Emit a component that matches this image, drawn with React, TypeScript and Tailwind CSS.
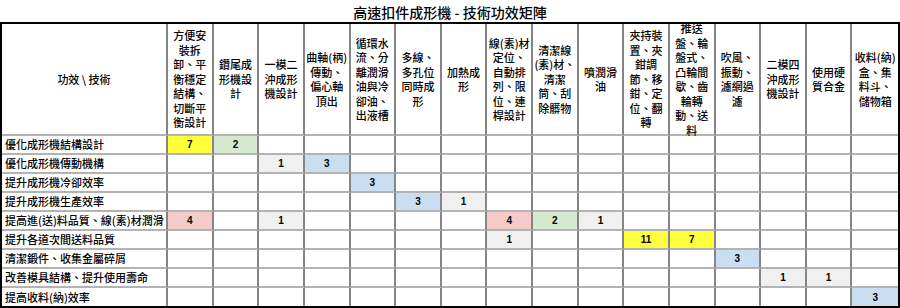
import React from "react";

const cols: string[][] = [
  ["方便安", "裝拆", "卸、平", "衡穩定", "結構、", "切斷平", "衡設計"],
  ["鑽尾成", "形機設", "計"],
  ["一模二", "沖成形", "機設計"],
  ["曲軸(柄)", "傳動、", "偏心軸", "頂出"],
  ["循環水", "流、分", "離潤滑", "油與冷", "卻油、", "出液槽"],
  ["多線、", "多孔位", "同時成", "形"],
  ["加熱成", "形"],
  ["線(素)材", "定位、", "自動排", "列、限", "位、連", "桿設計"],
  ["清潔線", "(素)材、", "清潔", "筒、刮", "除髒物"],
  ["噴潤滑", "油"],
  ["夾持裝", "置、夾", "鉗調", "節、移", "鉗、定", "位、翻", "轉"],
  ["推送", "盤、輪", "盤式、", "凸輪間", "歇、齒", "輪轉", "動、送", "料"],
  ["吹風、", "振動、", "濾網過", "濾"],
  ["二模四", "沖成形", "機設計"],
  ["使用硬", "質合金"],
  ["收料(納)", "盒、集", "料斗、", "儲物箱"],
];

type Cell = { v: string; c: string };
const Y = "bg-[#ffff3c]";
const G = "bg-[#d7e8d0]";
const Gr = "bg-[#f0f0f0]";
const B = "bg-[#cadef1]";
const P = "bg-[#f5caca]";

const rows: { label: string; cells: Record<number, Cell> }[] = [
  { label: "優化成形機結構設計", cells: { 0: { v: "7", c: Y }, 1: { v: "2", c: G } } },
  { label: "優化成形機傳動機構", cells: { 2: { v: "1", c: Gr }, 3: { v: "3", c: B } } },
  { label: "提升成形機冷卻效率", cells: { 4: { v: "3", c: B } } },
  { label: "提升成形機生產效率", cells: { 5: { v: "3", c: B }, 6: { v: "1", c: Gr } } },
  {
    label: "提高進(送)料品質、線(素)材潤滑",
    cells: {
      0: { v: "4", c: P },
      2: { v: "1", c: Gr },
      7: { v: "4", c: P },
      8: { v: "2", c: G },
      9: { v: "1", c: Gr },
    },
  },
  {
    label: "提升各道次間送料品質",
    cells: { 7: { v: "1", c: Gr }, 10: { v: "11", c: Y }, 11: { v: "7", c: Y } },
  },
  { label: "清潔鍛件、收集金屬碎屑", cells: { 12: { v: "3", c: B } } },
  { label: "改善模具結構、提升使用壽命", cells: { 13: { v: "1", c: Gr }, 14: { v: "1", c: Gr } } },
  { label: "提高收料(納)效率", cells: { 15: { v: "3", c: B } } },
];

const font = { fontFamily: '"Noto Sans CJK TC", "Noto Sans", sans-serif' };

export default function App() {
  return (
    <div className="w-[900px] h-[308px] bg-white text-black overflow-hidden" style={font}>
      <div className="h-[22px] flex items-center justify-center text-[14px] leading-none pt-[1px] font-medium">
        高速扣件成形機 - 技術功效矩陣
      </div>
      <div className="w-[900px] border-2 border-black grid grid-cols-[166px_repeat(16,minmax(0,1fr))] grid-rows-[112px_repeat(8,19px)_18px]">
        <div className="border-r-2 border-r-[#858585] border-b-2 border-b-[#b3b3b3] flex items-center justify-center text-[11px] font-medium whitespace-pre">
          功效 \ 技術
        </div>
        {cols.map((lines, i) => (
          <div
            key={i}
            className={`border-b-2 border-b-[#b3b3b3] flex flex-col items-center justify-center text-[11px] leading-[14.5px] whitespace-nowrap font-medium ${
              i < 15 ? "border-r-2 border-r-[#858585]" : ""
            }`}
          >
            {lines.map((l, j) => (
              <span key={j}>{l}</span>
            ))}
          </div>
        ))}
        {rows.map((r, ri) => {
          const last = ri === rows.length - 1;
          const hb = last ? "" : "border-b-2 border-b-[#b3b3b3]";
          return (
            <React.Fragment key={ri}>
              <div
                className={`${hb} border-r-2 border-r-[#858585] flex items-center pl-[3px] text-[11px] font-medium whitespace-nowrap overflow-visible relative z-10`}
              >
                {r.label}
              </div>
              {Array.from({ length: 16 }).map((_, ci) => {
                const cell = r.cells[ci];
                return (
                  <div
                    key={ci}
                    className={`${hb} ${ci < 15 ? "border-r-2 border-r-[#858585]" : ""} ${
                      cell ? cell.c : ""
                    } flex items-center justify-center text-[10px] font-bold`}
                    style={{ fontFamily: '"Liberation Sans", Arial, sans-serif' }}
                  >
                    {cell ? cell.v : ""}
                  </div>
                );
              })}
            </React.Fragment>
          );
        })}
      </div>
    </div>
  );
}
